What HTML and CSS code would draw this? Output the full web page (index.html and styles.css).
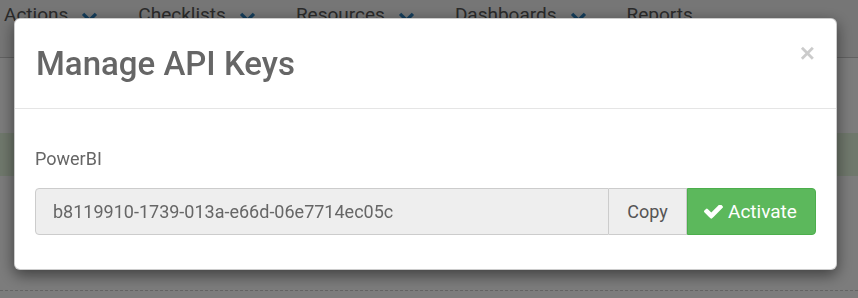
FILE: index.html
```html
<!DOCTYPE html>
<html>
<head>
<meta charset="utf-8">
<link rel="stylesheet" href="styles.css">
</head>
<body>
<div class="page">
  <nav class="topnav">
    <div class="nav-item">Actions <svg class="chev" viewBox="0 0 18 12"><path d="M2 2l7 7 7-7" fill="none" stroke="currentColor" stroke-width="3.6"/></svg></div>
    <div class="nav-item">Checklists <svg class="chev" viewBox="0 0 18 12"><path d="M2 2l7 7 7-7" fill="none" stroke="currentColor" stroke-width="3.6"/></svg></div>
    <div class="nav-item">Resources <svg class="chev" viewBox="0 0 18 12"><path d="M2 2l7 7 7-7" fill="none" stroke="currentColor" stroke-width="3.6"/></svg></div>
    <div class="nav-item">Dashboards <svg class="chev" viewBox="0 0 18 12"><path d="M2 2l7 7 7-7" fill="none" stroke="currentColor" stroke-width="3.6"/></svg></div>
    <div class="nav-item">Reports</div>
  </nav>
  <main class="content">
    <div class="alert">&nbsp;</div>
    <div class="dashed"></div>
  </main>
</div>
<div class="backdrop"></div>
<div class="modal">
  <div class="modal-header">
    <h4 class="modal-title">Manage API Keys</h4>
    <button class="close" type="button">×</button>
  </div>
  <div class="modal-body">
    <label class="field-label">PowerBI</label>
    <div class="input-group">
      <input class="key-input" type="text" readonly value="b8119910-1739-013a-e66d-06e7714ec05c">
      <span class="addon">Copy</span>
      <button class="btn-activate" type="button"><svg class="check" viewBox="120 420 1552 1110"><path d="M1671 566q0 40-28 68l-724 724-136 136q-28 28-68 28t-68-28l-136-136-362-362q-28-28-28-68t28-68l136-136q28-28 68-28t68 28l294 295 656-657q28-28 68-28t68 28l136 136q28 28 28 68z" fill="currentColor"/></svg>Activate</button>
    </div>
  </div>
</div>
</body>
</html>
```
FILE: styles.css
```css
* { box-sizing: border-box; }
html, body { margin: 0; padding: 0; }
body {
  font-family: Roboto, "Liberation Sans", sans-serif;
  background: #f8f8f8;
  width: 858px;
  height: 298px;
  overflow: hidden;
}
.page { width: 858px; }
.topnav {
  height: 58px;
  background: #ececec;
  border-bottom: 1px solid #c4c4c4;
  display: flex;
  gap: 40px;
  padding-left: 4px;
  padding-top: 3px;
}
.nav-item {
  font-size: 19px;
  line-height: 24px;
  color: #555;
  display: flex;
  align-items: center;
  gap: 13px;
  height: 24px;
}
.chev { width: 17px; height: 11px; color: #2b7bb5; margin-top: 4px; }
.content { padding-top: 75px; }
.alert {
  height: 43px;
  background: #dff0d8;
}
.dashed {
  margin-top: 114px;
  border-top: 1px dashed #c8c8c8;
}
.backdrop {
  position: fixed;
  inset: 0;
  background: rgba(0,0,0,0.5);
}
.modal {
  position: fixed;
  top: 18px;
  left: 14px;
  width: 823px;
  background: #fff;
  border: 1px solid rgba(0,0,0,0.2);
  border-radius: 6px;
  box-shadow: 0 5px 15px rgba(0,0,0,0.5);
  color: #666;
}
.modal-header {
  display: flex;
  justify-content: space-between;
  align-items: flex-start;
  padding: 27px 20px 26px 21px;
  border-bottom: 1px solid #e5e5e5;
}
.modal-title {
  margin: 0;
  font-size: 33px;
  line-height: 36px;
  font-weight: 500;
  color: #666;
}
.close {
  border: 0;
  background: none;
  padding: 0;
  margin-top: -6px;
  margin-right: 1px;
  font-family: "Liberation Sans", sans-serif;
  font-size: 26px;
  font-weight: bold;
  line-height: 26px;
  color: #000;
  opacity: 0.2;
}
.modal-body {
  padding: 40px 20px 34px 20px;
  display: flex;
  flex-direction: column;
}
.field-label {
  font-size: 18px;
  line-height: 20px;
  color: #666;
  margin-bottom: 19px;
}
.input-group {
  display: flex;
  height: 47px;
}
.key-input {
  flex: 1;
  min-width: 0;
  height: 47px;
  border: 1px solid #ccc;
  border-radius: 4px 0 0 4px;
  background: #eee;
  color: #666;
  font-family: Roboto, "Liberation Sans", sans-serif;
  font-size: 18px;
  padding: 0 17px;
  outline: none;
}
.addon {
  display: flex;
  align-items: center;
  justify-content: center;
  background: #eee;
  border: 1px solid #ccc;
  border-left: 0;
  color: #555;
  font-size: 18px;
  width: 78px;
}
.btn-activate {
  display: flex;
  align-items: center;
  gap: 5px;
  background: #5cb85c;
  border: 1px solid #4cae4c;
  border-radius: 0 4px 4px 0;
  color: #fff;
  font-family: Roboto, "Liberation Sans", sans-serif;
  font-size: 19px;
  padding: 0 17px 0 16px;
  width: 129px;
}
.check { width: 19px; height: 14px; flex: none; }
```
